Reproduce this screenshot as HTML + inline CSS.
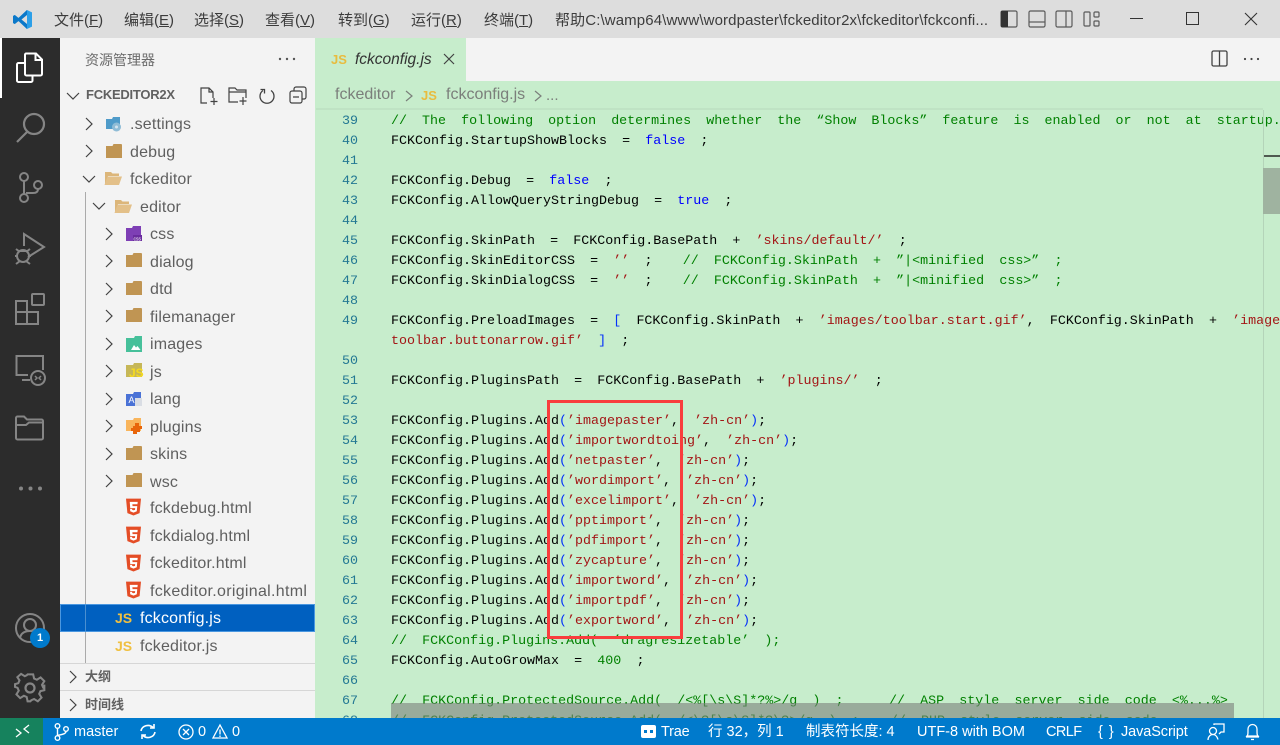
<!DOCTYPE html>
<html><head><meta charset="utf-8"><style>
*{box-sizing:border-box}
html,body{margin:0;padding:0;width:1280px;height:745px;overflow:hidden;background:#c7edcc;font-family:"Liberation Sans","Noto Sans CJK SC",sans-serif}
.a{position:absolute}
svg{position:absolute;overflow:visible}
#title{left:0;top:0;width:1280px;height:38px;background:#dddddd}
.m{position:absolute;top:11px;font-size:15px;line-height:19px;color:#3c3c3c;white-space:pre}
.m u{text-underline-offset:1px}
#act{left:0;top:38px;width:60px;height:680px;background:#2c2c2c}
#side{left:60px;top:38px;width:255px;height:680px;background:#f3f3f3}
.r{position:absolute;font-size:16px;line-height:20px;margin-top:2px;letter-spacing:.17px;color:#5f5f5f;white-space:pre}
.h{margin-top:0;letter-spacing:0}
.chev{position:absolute;width:16px;height:16px}
.l{position:absolute;left:0;width:1280px;height:20px;line-height:20px;font-family:"Liberation Mono",monospace;font-size:13.33px;white-space:pre;color:#000}
.n{position:absolute;left:316px;width:42px;text-align:right;color:#237893}
.c{position:absolute;left:391px;word-spacing:-.42px}
.g{color:#008000}.b{color:#0000ff}.s{color:#a31515}.p{color:#0431fa}
#status{left:0;top:718px;width:1280px;height:27px;background:#007acc}
.st{position:absolute;top:5px;font-size:14.5px;line-height:19px;color:#fff;white-space:pre}
</style></head><body>
<svg width="0" height="0" style="position:absolute">
<defs>
<symbol id="fc" viewBox="0 0 16 14"><path d="M0 2h6.500l1-2h7.500a1 1 0 0 1 1 1v13H0z" fill="#c09553"/></symbol>
<symbol id="fo" viewBox="0 0 18 14"><path d="M1 1h6l1.500 1.500H15V5H4L1 14z" fill="#dcb67a"/><path d="M3.500 5.500H18L15 14H0.500z" fill="#e3c089"/></symbol>
<symbol id="html" viewBox="0 0 16 18"><path d="M0 0h16l-1.500 15.500L8 18l-6.500-2.500z" fill="#e44d26"/><path d="M4 3.500h8.500l-.3 2.500H6.800l.2 2h5l-.5 5.500L8 15l-3.500-1.500-.2-2.500h2.200l.1 1 1.400.5 1.600-.5.200-1.800H4.500z" fill="#fff"/></symbol>
<symbol id="chr" viewBox="0 0 16 16"><path d="M5 2l6 6-6 6" fill="none" stroke="#424242" stroke-width="1.200"/></symbol>
<symbol id="chd" viewBox="0 0 16 16"><path d="M2 5l6 6 6-6" fill="none" stroke="#424242" stroke-width="1.200"/></symbol>
</defs></svg>

<div class="a" style="left:316px;top:38px;width:964px;height:680px;background:#c7edcc"></div>

<!-- editor header -->
<div class="a" style="left:466px;top:38px;width:814px;height:43px;background:#f3f3f3"></div>
<div class="a" style="left:331px;top:52px;font:bold 13px 'Liberation Sans',sans-serif;color:#e8bc3f">JS</div>
<div class="a" style="left:355px;top:50px;font-size:15.5px;line-height:20px;font-style:italic;color:#333">fckconfig.js</div>
<svg style="left:443px;top:53px" width="12" height="12"><path d="M1 1l10 10M11 1L1 11" stroke="#424242" stroke-width="1.200"/></svg>
<svg style="left:1211px;top:50px" width="17" height="17"><rect x="1" y="1" width="15" height="15" rx="1.500" fill="none" stroke="#424242" stroke-width="1.300"/><path d="M8.500 1v15" stroke="#424242" stroke-width="1.300"/></svg>
<svg style="left:1243px;top:57px" width="17" height="4"><circle cx="2" cy="2" r="1.100" fill="#424242"/><circle cx="8.500" cy="2" r="1.100" fill="#424242"/><circle cx="15" cy="2" r="1.100" fill="#424242"/></svg>

<div class="a" style="left:335px;top:85px;font-size:16px;line-height:20px;color:#7b7f7b;white-space:pre">fckeditor</div>
<svg style="left:404px;top:89px" width="10" height="14"><path d="M2 2l6 5-6 5" fill="none" stroke="#7b7f7b" stroke-width="1.200"/></svg>
<div class="a" style="left:421px;top:88px;font:bold 13px 'Liberation Sans',sans-serif;color:#e8bc3f">JS</div>
<div class="a" style="left:446px;top:85px;font-size:16px;line-height:20px;color:#7b7f7b;white-space:pre">fckconfig.js</div>
<svg style="left:533px;top:89px" width="10" height="14"><path d="M2 2l6 5-6 5" fill="none" stroke="#7b7f7b" stroke-width="1.200"/></svg>
<div class="a" style="left:546px;top:86px;font-size:15px;line-height:20px;color:#7b7f7b">...</div>
<div class="a" style="left:316px;top:108px;width:947px;height:2px;background:#bfe3c4"></div>

<!-- code -->
<div class="a" id="code" style="left:0;top:2px;width:1280px;height:716px;overflow:hidden">
<div class="l" style="top:108px;display:none"></div>
<div class="l" style="top:110px"><span class="n">39</span><span class="c g" style="word-spacing:-.47px">//  The  following  option  determines  whether  the  “Show  Blocks”  feature  is  enabled  or  not  at  startup.</span></div>
<div class="l" style="top:130px"><span class="n">40</span><span class="c">FCKConfig.StartupShowBlocks  =  <span class="b">false</span>  ;</span></div>
<div class="l" style="top:150px"><span class="n">41</span></div>
<div class="l" style="top:170px"><span class="n">42</span><span class="c">FCKConfig.Debug  =  <span class="b">false</span>  ;</span></div>
<div class="l" style="top:190px"><span class="n">43</span><span class="c">FCKConfig.AllowQueryStringDebug  =  <span class="b">true</span>  ;</span></div>
<div class="l" style="top:210px"><span class="n">44</span></div>
<div class="l" style="top:230px"><span class="n">45</span><span class="c">FCKConfig.SkinPath  =  FCKConfig.BasePath  +  <span class="s">’skins/default/’</span>  ;</span></div>
<div class="l" style="top:250px"><span class="n">46</span><span class="c">FCKConfig.SkinEditorCSS  =  <span class="s">’’</span>  ;    <span class="g">//  FCKConfig.SkinPath  +  ”|&lt;minified  css&gt;”  ;</span></span></div>
<div class="l" style="top:270px"><span class="n">47</span><span class="c">FCKConfig.SkinDialogCSS  =  <span class="s">’’</span>  ;    <span class="g">//  FCKConfig.SkinPath  +  ”|&lt;minified  css&gt;”  ;</span></span></div>
<div class="l" style="top:290px"><span class="n">48</span></div>
<div class="l" style="top:310px"><span class="n">49</span><span class="c">FCKConfig.PreloadImages  =  <span class="p">[</span>  FCKConfig.SkinPath  +  <span class="s">’images/toolbar.start.gif’</span>,  FCKConfig.SkinPath  +  <span class="s">’image</span></span></div>
<div class="l" style="top:330px"><span class="c"><span class="s">toolbar.buttonarrow.gif’</span>  <span class="p">]</span>  ;</span></div>
<div class="l" style="top:350px"><span class="n">50</span></div>
<div class="l" style="top:370px"><span class="n">51</span><span class="c">FCKConfig.PluginsPath  =  FCKConfig.BasePath  +  <span class="s">’plugins/’</span>  ;</span></div>
<div class="l" style="top:390px"><span class="n">52</span></div>
<div class="l" style="top:410px"><span class="n">53</span><span class="c">FCKConfig.Plugins.Add<span class="p">(</span><span class="s">’imagepaster’</span>,  <span class="s">’zh-cn’</span><span class="p">)</span>;</span></div>
<div class="l" style="top:430px"><span class="n">54</span><span class="c">FCKConfig.Plugins.Add<span class="p">(</span><span class="s">’importwordtoing’</span>,  <span class="s">’zh-cn’</span><span class="p">)</span>;</span></div>
<div class="l" style="top:450px"><span class="n">55</span><span class="c">FCKConfig.Plugins.Add<span class="p">(</span><span class="s">’netpaster’</span>,  <span class="s">’zh-cn’</span><span class="p">)</span>;</span></div>
<div class="l" style="top:470px"><span class="n">56</span><span class="c">FCKConfig.Plugins.Add<span class="p">(</span><span class="s">’wordimport’</span>,  <span class="s">’zh-cn’</span><span class="p">)</span>;</span></div>
<div class="l" style="top:490px"><span class="n">57</span><span class="c">FCKConfig.Plugins.Add<span class="p">(</span><span class="s">’excelimport’</span>,  <span class="s">’zh-cn’</span><span class="p">)</span>;</span></div>
<div class="l" style="top:510px"><span class="n">58</span><span class="c">FCKConfig.Plugins.Add<span class="p">(</span><span class="s">’pptimport’</span>,  <span class="s">’zh-cn’</span><span class="p">)</span>;</span></div>
<div class="l" style="top:530px"><span class="n">59</span><span class="c">FCKConfig.Plugins.Add<span class="p">(</span><span class="s">’pdfimport’</span>,  <span class="s">’zh-cn’</span><span class="p">)</span>;</span></div>
<div class="l" style="top:550px"><span class="n">60</span><span class="c">FCKConfig.Plugins.Add<span class="p">(</span><span class="s">’zycapture’</span>,  <span class="s">’zh-cn’</span><span class="p">)</span>;</span></div>
<div class="l" style="top:570px"><span class="n">61</span><span class="c">FCKConfig.Plugins.Add<span class="p">(</span><span class="s">’importword’</span>,  <span class="s">’zh-cn’</span><span class="p">)</span>;</span></div>
<div class="l" style="top:590px"><span class="n">62</span><span class="c">FCKConfig.Plugins.Add<span class="p">(</span><span class="s">’importpdf’</span>,  <span class="s">’zh-cn’</span><span class="p">)</span>;</span></div>
<div class="l" style="top:610px"><span class="n">63</span><span class="c">FCKConfig.Plugins.Add<span class="p">(</span><span class="s">’exportword’</span>,  <span class="s">’zh-cn’</span><span class="p">)</span>;</span></div>
<div class="l" style="top:630px"><span class="n">64</span><span class="c g">//  FCKConfig.Plugins.Add(  ’dragresizetable’  );</span></div>
<div class="l" style="top:650px"><span class="n">65</span><span class="c">FCKConfig.AutoGrowMax  =  <span class="g">400</span>  ;</span></div>
<div class="l" style="top:670px"><span class="n">66</span></div>
<div class="l" style="top:690px"><span class="n">67</span><span class="c g">//  FCKConfig.ProtectedSource.Add(  /&lt;%[\s\S]*?%&gt;/g  )  ;      //  ASP  style  server  side  code  &lt;%...%&gt;</span></div>
<div class="l" style="top:710px"><span class="n">68</span><span class="c g">//  FCKConfig.ProtectedSource.Add(  /&lt;\?[\s\S]*?\?&gt;/g  )  ;    //  PHP  style  server  side  code</span></div>
</div>

<!-- scrollbars -->
<div class="a" style="left:391px;top:703px;width:843px;height:15px;background:rgba(125,130,125,.62)"></div>
<div class="a" style="left:1263px;top:110px;width:1px;height:608px;background:#b4d4b9"></div>
<div class="a" style="left:1264px;top:155px;width:16px;height:2px;background:#4f5a50"></div>
<div class="a" style="left:1263px;top:168px;width:17px;height:46px;background:#9fb3a0"></div>

<!-- red box -->
<div class="a" style="left:547px;top:400px;width:136px;height:239px;border:3px solid #f93d3d"></div>

<!-- title bar -->
<div class="a" id="title">
<svg style="left:12px;top:9px" width="21" height="21" viewBox="0 0 21 21"><path d="M15 1l5 2.400v14.200L15 20 6.500 12 2.800 15 1 14V7l1.800-1 3.700 3z" fill="#2b9fe8"/><path d="M15 1L6.500 9l-3.700-3L1 7v7l1.800 1 3.700-3L15 20z" fill="#0b78c9"/><path d="M15 6l-5.500 4.500L15 15z" fill="#dddddd"/></svg>
<div class="m" style="left:54px">文件(<u>F</u>)</div>
<div class="m" style="left:124px">编辑(<u>E</u>)</div>
<div class="m" style="left:194px">选择(<u>S</u>)</div>
<div class="m" style="left:265px">查看(<u>V</u>)</div>
<div class="m" style="left:338px">转到(<u>G</u>)</div>
<div class="m" style="left:411px">运行(<u>R</u>)</div>
<div class="m" style="left:484px">终端(<u>T</u>)</div>
<div class="m" style="left:555px;width:436px;overflow:hidden;letter-spacing:.12px">帮助C:\wamp64\www\wordpaster\fckeditor2x\fckeditor\fckconfi...</div>
<svg style="left:1000px;top:10px" width="18" height="18"><rect x="1" y="1" width="16" height="16" rx="1.500" fill="none" stroke="#5a5a5a" stroke-width="1.200"/><rect x="1" y="1" width="7" height="16" fill="#333"/></svg>
<svg style="left:1028px;top:10px" width="18" height="18"><rect x="1" y="1" width="16" height="16" rx="1.500" fill="none" stroke="#5a5a5a" stroke-width="1.200"/><path d="M1 12h16" stroke="#5a5a5a" stroke-width="1.200"/></svg>
<svg style="left:1055px;top:10px" width="18" height="18"><rect x="1" y="1" width="16" height="16" rx="1.500" fill="none" stroke="#5a5a5a" stroke-width="1.200"/><path d="M11 1v16" stroke="#5a5a5a" stroke-width="1.200"/></svg>
<svg style="left:1083px;top:10px" width="18" height="18"><rect x="1" y="2" width="6" height="14" rx="1" fill="none" stroke="#5a5a5a" stroke-width="1.200"/><rect x="11" y="2" width="5" height="5" rx="1" fill="none" stroke="#5a5a5a" stroke-width="1.200"/><rect x="11" y="11" width="5" height="5" rx="1" fill="none" stroke="#5a5a5a" stroke-width="1.200"/></svg>
<div class="a" style="left:1130px;top:18px;width:13px;height:1px;background:#333"></div>
<div class="a" style="left:1186px;top:12px;width:13px;height:13px;border:1px solid #333"></div>
<svg style="left:1244px;top:12px" width="14" height="14"><path d="M1 1l12 12M13 1L1 13" stroke="#333" stroke-width="1.100"/></svg>
</div>

<!-- activity bar -->
<div class="a" id="act"></div>
<div class="a" style="left:0;top:38px;width:2px;height:60px;background:#fff"></div>
<svg style="left:15px;top:52px" width="30" height="32" fill="none" stroke="#fff" stroke-width="2"><path d="M10 11H3.500a1.500 1.500 0 0 0-1.500 1.500v16A1.500 1.500 0 0 0 3.500 30H16a1.500 1.500 0 0 0 1.500-1.500V24"/><path d="M11 1.500h10l6 6V22a1.500 1.500 0 0 1-1.500 1.500h-14A1.500 1.500 0 0 1 10 22V3a1.500 1.500 0 0 1 1-1.500z"/><path d="M20.500 2v6h6"/></svg>
<svg style="left:15px;top:112px" width="30" height="32" fill="none" stroke="#858585" stroke-width="2.200"><circle cx="19" cy="12" r="10"/><path d="M12 20L2 30"/></svg>
<svg style="left:17px;top:172px" width="28" height="32" fill="none" stroke="#858585" stroke-width="2"><circle cx="7" cy="5" r="4"/><circle cx="7" cy="26" r="4"/><circle cx="21" cy="13" r="4"/><path d="M7 9v13M21 17c0 3-2 4-5 4H9"/></svg>
<svg style="left:14px;top:232px" width="32" height="34" fill="none" stroke="#858585" stroke-width="2"><path d="M10 14V2l20 13-16 10"/><circle cx="9" cy="24" r="6"/><path d="M2 17l4 3M16 17l-4 3M1 24h3M14 24h3M2 32l4-3M16 32l-4-3M5 19h8"/></svg>
<svg style="left:14px;top:292px" width="32" height="34" fill="none" stroke="#858585" stroke-width="2"><rect x="2" y="9" width="11" height="11"/><rect x="2" y="20" width="11" height="12"/><rect x="13" y="20" width="11" height="12"/><rect x="18" y="2" width="12" height="11" rx="1"/></svg>
<svg style="left:14px;top:354px" width="32" height="32" fill="none" stroke="#858585" stroke-width="2"><path d="M14 21H2.500V2H29v14"/><path d="M8 26h8"/><circle cx="24" cy="24" r="7"/><path d="M21 22l2 2-2 2M27 22l-2 2 2 2" stroke-width="1.500"/></svg>
<svg style="left:14px;top:414px" width="32" height="28" fill="none" stroke="#858585" stroke-width="2"><path d="M2 24V4a1.500 1.500 0 0 1 1.500-1.500H10l3 3h14.500A1.500 1.500 0 0 1 29 7v17a1.500 1.500 0 0 1-1.500 1.500h-24A1.500 1.500 0 0 1 2 24z"/><path d="M2 11h10l3-2.500h14"/></svg>
<svg style="left:18px;top:486px" width="26" height="5" fill="#858585"><circle cx="3" cy="2.500" r="2"/><circle cx="12.500" cy="2.500" r="2"/><circle cx="22" cy="2.500" r="2"/></svg>
<svg style="left:14px;top:612px" width="32" height="32" fill="none" stroke="#858585" stroke-width="2"><circle cx="16" cy="16" r="14"/><circle cx="16" cy="13" r="6"/><path d="M6 26c1-5 5-7 10-7s9 2 10 7"/></svg>
<div class="a" style="left:30px;top:628px;width:20px;height:20px;border-radius:50%;background:#007acc;color:#fff;font-size:11px;font-weight:bold;line-height:20px;text-align:center">1</div>
<svg style="left:14px;top:672px" width="32" height="32" fill="none" stroke="#858585" stroke-width="2.200"><path d="M13 2h6l1 4.500 3 1.300 4-2.500 4 4-2.500 4 1.300 3L31 17v0l0 0v-4 6l-4.200 1-1.300 3 2.500 4-4 4-4-2.500-3 1.300L16 31h-3l-1-4.700-3-1.300-4 2.500-4-4 2.500-4-1.300-3L-.500 15.500v-3l3.500-1 1.300-3L2 5l4-3.500 4 2.500 2-1z" transform="translate(1.500 .5) scale(.93)"/><circle cx="16" cy="16" r="4.500"/></svg>

<!-- sidebar -->
<div class="a" id="side"></div>
<div class="a" style="left:85px;top:50px;font-size:14px;line-height:20px;color:#6b6b6b">资源管理器</div>
<svg style="left:278px;top:57px" width="18" height="4" fill="#555"><circle cx="2" cy="2" r="1.200"/><circle cx="9" cy="2" r="1.200"/><circle cx="16" cy="2" r="1.200"/></svg>
<svg class="chev" style="left:65px;top:88px"><use href="#chd"/></svg>
<div class="r h" style="left:86px;top:85px;font-size:13px;font-weight:bold;color:#616161;letter-spacing:-.25px">FCKEDITOR2X</div>
<svg style="left:199px;top:86px" width="20" height="20" fill="none" stroke="#424242" stroke-width="1.200"><path d="M8 17H2V2h8l4 4v6M10 2v4h4M15 12v7M11.500 15.500h7"/></svg>
<svg style="left:228px;top:86px" width="21" height="20" fill="none" stroke="#424242" stroke-width="1.200"><path d="M10 16H1V2h6l2 2h9v8M1 6h17M15 11v8M11.500 15h7"/></svg>
<svg style="left:259px;top:87px" width="17" height="18" fill="none" stroke="#424242" stroke-width="1.300"><path d="M4 3.500a7 7 0 1 0 8 0M1.500 2.500h4v4"/></svg>
<svg style="left:289px;top:86px" width="18" height="18" fill="none" stroke="#424242" stroke-width="1.200"><rect x="1" y="5" width="12" height="12" rx="2"/><path d="M5 5V3a2 2 0 0 1 2-2h8a2 2 0 0 1 2 2v8a2 2 0 0 1-2 2h-2M4 11h6"/></svg>

<div class="a" style="left:85px;top:192px;width:1px;height:471px;background:#aaa"></div>

<svg class="chev" style="left:81px;top:116px"><use href="#chr"/></svg>
<svg style="left:105px;top:116px" width="18" height="17"><path d="M1 3h6l1-2h7v12H1z" fill="#4f9bc9"/><circle cx="11.500" cy="11" r="4.500" fill="#8fbcd6"/><circle cx="11.500" cy="11" r="1.500" fill="#d4e4ee"/></svg>
<div class="r" style="left:130px;top:113px">.settings</div>

<svg class="chev" style="left:81px;top:143px"><use href="#chr"/></svg>
<svg style="left:106px;top:144px" width="16" height="14"><use href="#fc"/></svg>
<div class="r" style="left:130px;top:141px">debug</div>

<svg class="chev" style="left:81px;top:171px"><use href="#chd"/></svg>
<svg style="left:104px;top:171px" width="18" height="14"><use href="#fo"/></svg>
<div class="r" style="left:130px;top:168px">fckeditor</div>

<svg class="chev" style="left:91px;top:198px"><use href="#chd"/></svg>
<svg style="left:114px;top:199px" width="18" height="14"><use href="#fo"/></svg>
<div class="r" style="left:140px;top:196px">editor</div>

<svg class="chev" style="left:101px;top:226px"><use href="#chr"/></svg>
<svg style="left:125px;top:226px" width="18" height="16"><path d="M1 2h6l1-2h8v15H1z" fill="#7e3fb5"/><rect x="8" y="9" width="9" height="6" fill="#6a2c9e"/><text x="8.500" y="14.500" font-size="5" fill="#fff" font-family="Liberation Sans">css</text></svg>
<div class="r" style="left:150px;top:223px">css</div>

<svg class="chev" style="left:101px;top:253px"><use href="#chr"/></svg>
<svg style="left:126px;top:253px" width="16" height="14"><use href="#fc"/></svg>
<div class="r" style="left:150px;top:251px">dialog</div>

<svg class="chev" style="left:101px;top:281px"><use href="#chr"/></svg>
<svg style="left:126px;top:281px" width="16" height="14"><use href="#fc"/></svg>
<div class="r" style="left:150px;top:278px">dtd</div>

<svg class="chev" style="left:101px;top:308px"><use href="#chr"/></svg>
<svg style="left:126px;top:308px" width="16" height="14"><use href="#fc"/></svg>
<div class="r" style="left:150px;top:306px">filemanager</div>

<svg class="chev" style="left:101px;top:336px"><use href="#chr"/></svg>
<svg style="left:125px;top:336px" width="18" height="16"><path d="M1 2h8l1-2h7v16H1z" fill="#46c09a"/><path d="M6 14l3-5 2 2.500 1.500-1.500 3 4z" fill="#fff"/></svg>
<div class="r" style="left:150px;top:333px">images</div>

<svg class="chev" style="left:101px;top:363px"><use href="#chr"/></svg>
<svg style="left:126px;top:363px" width="16" height="14"><path d="M0 2h7l1-2h8v14H0z" fill="#c6b758"/></svg>
<div class="a" style="left:129px;top:366px;font:bold 12px 'Liberation Sans',sans-serif;color:#f5da1f">JS</div>
<div class="r" style="left:150px;top:361px">js</div>

<svg class="chev" style="left:101px;top:391px"><use href="#chr"/></svg>
<svg style="left:125px;top:390px" width="18" height="18"><path d="M1 4h7l1-2h7v14H1z" fill="#4a72d6"/><rect x="10" y="8" width="7" height="8" fill="#d9dde4"/><text x="3.500" y="13" font-size="9" fill="#fff" font-family="Liberation Sans">A</text></svg>
<div class="r" style="left:150px;top:388px">lang</div>

<svg class="chev" style="left:101px;top:418px"><use href="#chr"/></svg>
<svg style="left:125px;top:418px" width="18" height="17"><path d="M1 2h7l1-2h7v13H1z" fill="#f9b55c"/><path d="M8 8h2V5h4v3h3v3h-2v3h-3v2H8v-3H6v-3h2z" fill="#e8650a"/></svg>
<div class="r" style="left:150px;top:416px">plugins</div>

<svg class="chev" style="left:101px;top:446px"><use href="#chr"/></svg>
<svg style="left:126px;top:446px" width="16" height="14"><use href="#fc"/></svg>
<div class="r" style="left:150px;top:443px">skins</div>

<svg class="chev" style="left:101px;top:473px"><use href="#chr"/></svg>
<svg style="left:126px;top:473px" width="16" height="14"><use href="#fc"/></svg>
<div class="r" style="left:150px;top:471px">wsc</div>

<svg style="left:126px;top:498px" width="15" height="18"><use href="#html"/></svg>
<div class="r" style="left:150px;top:497px">fckdebug.html</div>
<svg style="left:126px;top:526px" width="15" height="18"><use href="#html"/></svg>
<div class="r" style="left:150px;top:525px">fckdialog.html</div>
<svg style="left:126px;top:554px" width="15" height="18"><use href="#html"/></svg>
<div class="r" style="left:150px;top:552px">fckeditor.html</div>
<svg style="left:126px;top:581px" width="15" height="18"><use href="#html"/></svg>
<div class="r" style="left:150px;top:580px;letter-spacing:.3px">fckeditor.original.html</div>

<div class="a" style="left:60px;top:604px;width:255px;height:28px;background:#0060c0;border:1px solid #4a97e0"></div>
<div class="a" style="left:85px;top:605px;width:1px;height:26px;background:#4a8fd0"></div>
<div class="a" style="left:115px;top:610px;font:bold 14px 'Liberation Sans',sans-serif;color:#f0c040">JS</div>
<div class="r" style="left:140px;top:607px;color:#fff">fckconfig.js</div>
<div class="a" style="left:115px;top:638px;font:bold 14px 'Liberation Sans',sans-serif;color:#f0c040">JS</div>
<div class="r" style="left:140px;top:635px">fckeditor.js</div>

<div class="a" style="left:60px;top:663px;width:255px;height:1px;background:#d6d6d6"></div>
<svg class="chev" style="left:65px;top:669px"><use href="#chr"/></svg>
<div class="r h" style="left:85px;top:667px;font-size:13px;font-weight:bold;color:#616161">大纲</div>
<div class="a" style="left:60px;top:690px;width:255px;height:1px;background:#d6d6d6"></div>
<svg class="chev" style="left:65px;top:697px"><use href="#chr"/></svg>
<div class="r h" style="left:85px;top:695px;font-size:13px;font-weight:bold;color:#616161">时间线</div>

<!-- status bar -->
<div class="a" id="status">
<div class="a" style="left:0;top:0;width:43px;height:27px;background:#16825d"></div>
<svg style="left:15px;top:6px" width="15" height="14" fill="none" stroke="#fff" stroke-width="1.300"><path d="M1 5l5 4-5 4M14 1L9 5l5 4"/></svg>
<svg style="left:54px;top:5px" width="15" height="18" fill="none" stroke="#fff" stroke-width="1.400"><circle cx="3.500" cy="3" r="2.300"/><circle cx="3.500" cy="15" r="2.300"/><circle cx="12" cy="6" r="2.300"/><path d="M3.500 5.300v7.400M12 8.300c0 2.500-3 3-8 4"/></svg>
<div class="st" style="left:74px">master</div>
<svg style="left:139px;top:5px" width="18" height="17" fill="none" stroke="#fff" stroke-width="1.600"><path d="M2 8a7 6.500 0 0 1 12-3.500M16 9a7 6.500 0 0 1-12 3.500"/><path d="M15 1v4h-4M3 16v-4h4"/></svg>
<svg style="left:178px;top:6px" width="16" height="16" fill="none" stroke="#fff" stroke-width="1.300"><circle cx="8" cy="8" r="7"/><path d="M5 5l6 6M11 5l-6 6"/></svg>
<div class="st" style="left:198px">0</div>
<svg style="left:212px;top:6px" width="16" height="15" fill="none" stroke="#fff" stroke-width="1.300"><path d="M8 1l7 13H1z"/><path d="M8 5.500v5M8 11.500v1.500"/></svg>
<div class="st" style="left:232px">0</div>

<svg style="left:641px;top:7px" width="15" height="13"><rect x="0" y="0" width="15" height="13" rx="2" fill="#fff"/><rect x="3" y="5" width="3" height="3" fill="#007acc"/><rect x="9" y="5" width="3" height="3" fill="#007acc"/></svg>
<div class="st" style="left:661px;letter-spacing:-.2px">Trae</div>
<div class="st" style="left:708px">行 32，列 1</div>
<div class="st" style="left:806px">制表符长度: 4</div>
<div class="st" style="left:917px">UTF-8 with BOM</div>
<div class="st" style="left:1046px;letter-spacing:-.6px">CRLF</div>
<div class="st" style="left:1098px;word-spacing:2px">{ }</div>
<div class="st" style="left:1121px;letter-spacing:-.1px">JavaScript</div>
<svg style="left:1207px;top:5px" width="18" height="18" fill="none" stroke="#fff" stroke-width="1.300"><circle cx="6" cy="8" r="3.500"/><path d="M1 17c0-3.500 2.500-5.500 5-5.500s4 1.500 5 5M7 2V1h10v8h-3l-2 2"/></svg>
<svg style="left:1245px;top:5px" width="15" height="18" fill="none" stroke="#fff" stroke-width="1.300"><path d="M2 13c1-1 1-2 1-7a4.500 4.500 0 0 1 9 0c0 5 0 6 1 7zM1 14h13M6 16.500h3"/></svg>
</div>
</body></html>
